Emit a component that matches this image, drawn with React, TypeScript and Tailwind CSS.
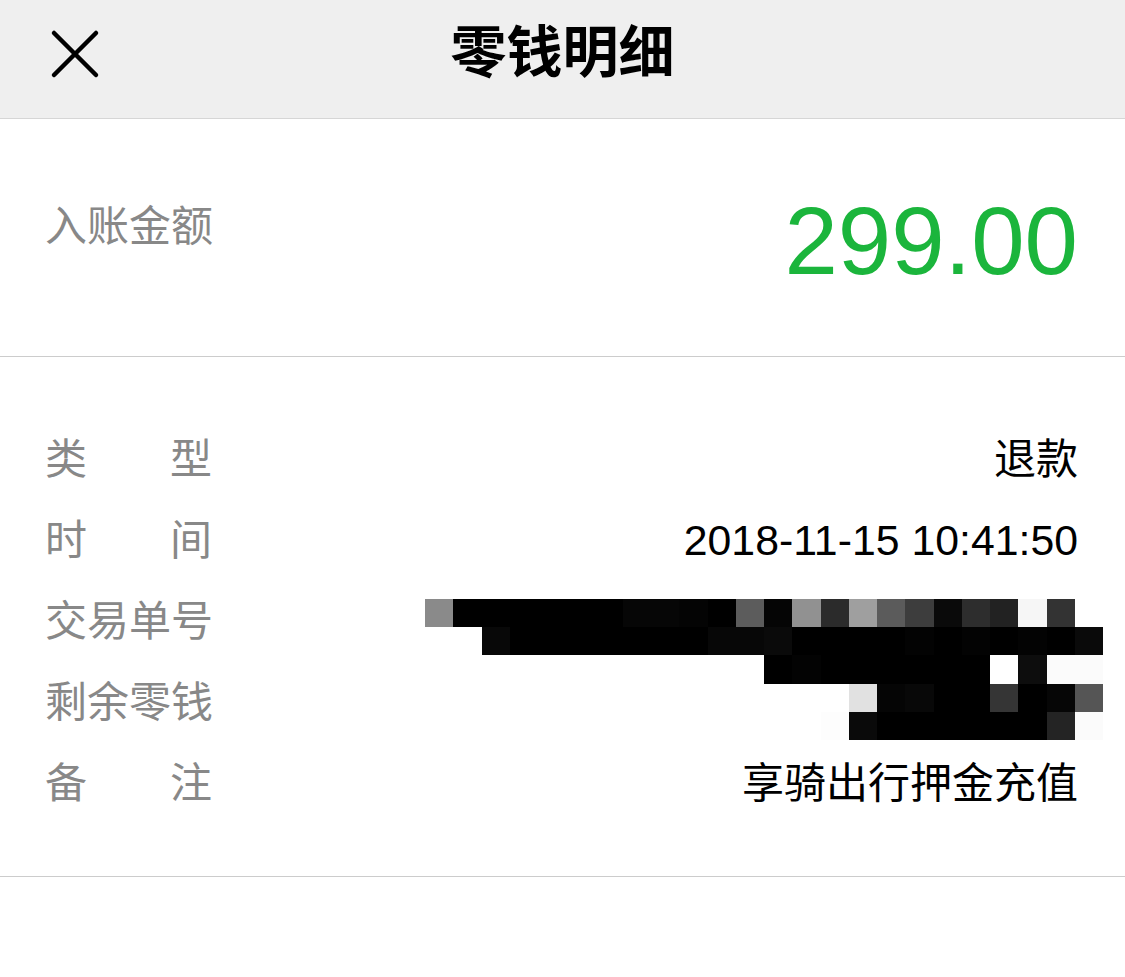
import React from "react";

type Cell = string | null;

const K = "bg-[#000000]";
const mosaic: Cell[][] = [
  [
    "bg-[#8a8a8a]", K, K, K, K, K, K, "bg-[#060606]", "bg-[#060606]", "bg-[#040404]", K,
    "bg-[#5c5c5c]", "bg-[#050505]", "bg-[#919191]", "bg-[#2b2b2b]", "bg-[#9f9f9f]", "bg-[#5b5b5b]",
    "bg-[#3d3d3d]", "bg-[#0a0a0a]", "bg-[#2d2d2d]", "bg-[#222222]", "bg-[#f6f6f6]", "bg-[#333333]", null,
  ],
  [
    null, null, "bg-[#080808]", K, K, K, K, K, K, K, "bg-[#070707]", "bg-[#070707]", "bg-[#0a0a0a]",
    K, K, K, K, "bg-[#030303]", K, "bg-[#030303]", K, "bg-[#030303]", K, "bg-[#0a0a0a]",
  ],
  [
    null, null, null, null, null, null, null, null, null, null, null, null,
    K, "bg-[#030303]", K, K, K, K, K, K, "bg-[#ffffff]", "bg-[#0d0d0d]", "bg-[#fbfbfb]", "bg-[#fbfbfb]",
  ],
  [
    null, null, null, null, null, null, null, null, null, null, null, null, null, null, null,
    "bg-[#e1e1e1]", "bg-[#050505]", "bg-[#080808]", K, K, "bg-[#353535]", K, "bg-[#060606]", "bg-[#555555]",
  ],
  [
    null, null, null, null, null, null, null, null, null, null, null, null, null, null,
    "bg-[#fdfdfd]", "bg-[#0a0a0a]", K, K, K, K, K, K, "bg-[#242424]", "bg-[#fbfbfb]",
  ],
];

function Label({ chars }: { chars: string[] }) {
  return (
    <div className="flex w-[167px] justify-between text-[42px] leading-none text-[#888888]">
      {chars.map((c, i) => (
        <span key={i}>{c}</span>
      ))}
    </div>
  );
}

function Row({ label, value, latin }: { label: string[]; value?: string; latin?: boolean }) {
  return (
    <div className="flex h-[81px] items-center justify-between">
      <Label chars={label} />
      {value ? (
        <div className={latin ? "text-[42.8px] leading-none text-black" : "text-[42px] leading-none text-black"}>
          {value}
        </div>
      ) : (
        <div />
      )}
    </div>
  );
}

export default function App() {
  return (
    <div className="min-h-[977px] w-full bg-white font-['Liberation_Sans','Noto_Sans_CJK_SC',sans-serif]">
      <header className="relative flex h-[119px] items-center justify-center border-b border-[#d6d6d6] bg-[#efefef]">
        <svg
          className="absolute left-[50px] top-[29px]"
          width="50"
          height="50"
          viewBox="0 0 50 50"
          fill="none"
          stroke="#000"
          strokeWidth="4.5"
          strokeLinecap="round"
        >
          <line x1="4" y1="4" x2="46" y2="46" />
          <line x1="46" y1="4" x2="4" y2="46" />
        </svg>
        <h1 className="-mt-[12px] text-[56px] font-bold leading-none text-black">零钱明细</h1>
      </header>

      <section className="flex h-[238px] items-start justify-between border-b border-[#cccccc] pl-[45px] pr-[47px]">
        <div className="mt-[87px] text-[42px] leading-none text-[#888888]">入账金额</div>
        <div className="mt-[74px] text-[96px] leading-none text-[#1bb53c]">299.00</div>
      </section>

      <section className="relative border-b border-[#cccccc] pb-[52px] pl-[45px] pr-[47px] pt-[62px]">
        <Row label={["类", "型"]} value="退款" />
        <Row label={["时", "间"]} value="2018-11-15 10:41:50" latin />
        <Row label={["交", "易", "单", "号"]} />
        <Row label={["剩", "余", "零", "钱"]} />
        <Row label={["备", "注"]} value="享骑出行押金充值" />

        <div className="absolute left-[425px] top-[242px] grid grid-cols-[repeat(24,28.25px)] grid-rows-[repeat(5,28.2px)]">
          {mosaic.flatMap((row, r) =>
            row.map((c, i) => <div key={`${r}-${i}`} className={c ?? ""} />)
          )}
        </div>
      </section>
    </div>
  );
}
